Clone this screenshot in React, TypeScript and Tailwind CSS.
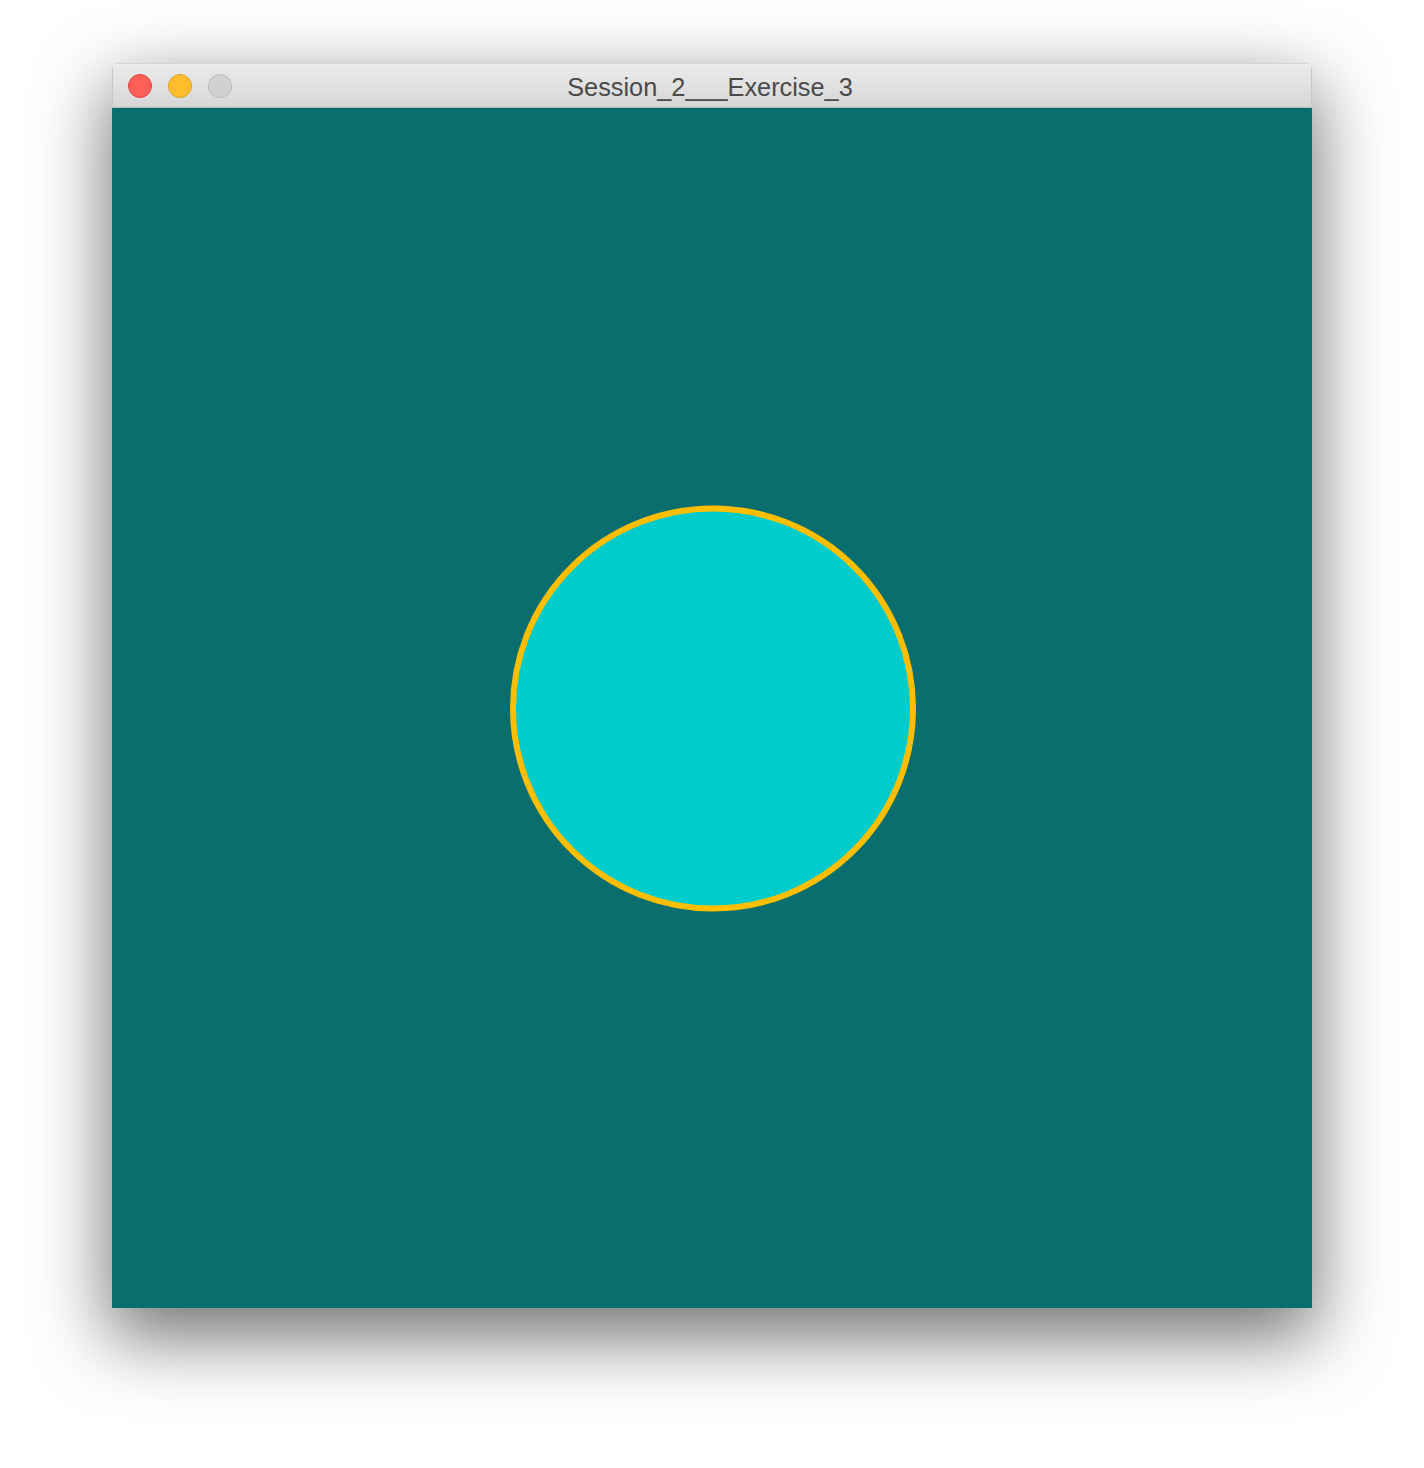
export default function App() {
  return (
    <div className="flex min-h-[1468px] w-full justify-center bg-white pt-[63px]">
      <div className="flex h-[1245px] w-[1200px] flex-col overflow-hidden rounded-t-[6px] shadow-[0_26px_72px_4px_rgba(0,0,0,0.55)]">
        {/* title bar */}
        <div className="relative flex h-[45px] shrink-0 items-center border border-b-[#b5b5b5] border-x-[#c8c8c8] border-t-[#d4d4d4] bg-gradient-to-b from-[#ececec] to-[#d6d6d6] px-[15px]">
          <div className="flex gap-[16px]">
            <span className="h-[24px] w-[24px] rounded-full border border-[#e0443e] bg-[#fe5f57]" />
            <span className="h-[24px] w-[24px] rounded-full border border-[#dea123] bg-[#ffbd2e]" />
            <span className="h-[24px] w-[24px] rounded-full border border-[#b9b9b9] bg-[#d1d1d1]" />
          </div>
          <p className="absolute inset-x-0 top-[8px] pr-[4px] text-center font-['Liberation_Sans',Arial,sans-serif] text-[25.3px] leading-[30px] text-[#4a4a4a]">
            Session_2___Exercise_3
          </p>
        </div>
        {/* canvas */}
        <div className="h-[1200px] w-[1200px] bg-[#0b6e6e]">
          <svg width="1200" height="1200" viewBox="0 0 1200 1200">
            <circle cx="601" cy="600.5" r="200" fill="#00cccc" stroke="#ffbf00" strokeWidth="6" />
          </svg>
        </div>
      </div>
    </div>
  );
}
